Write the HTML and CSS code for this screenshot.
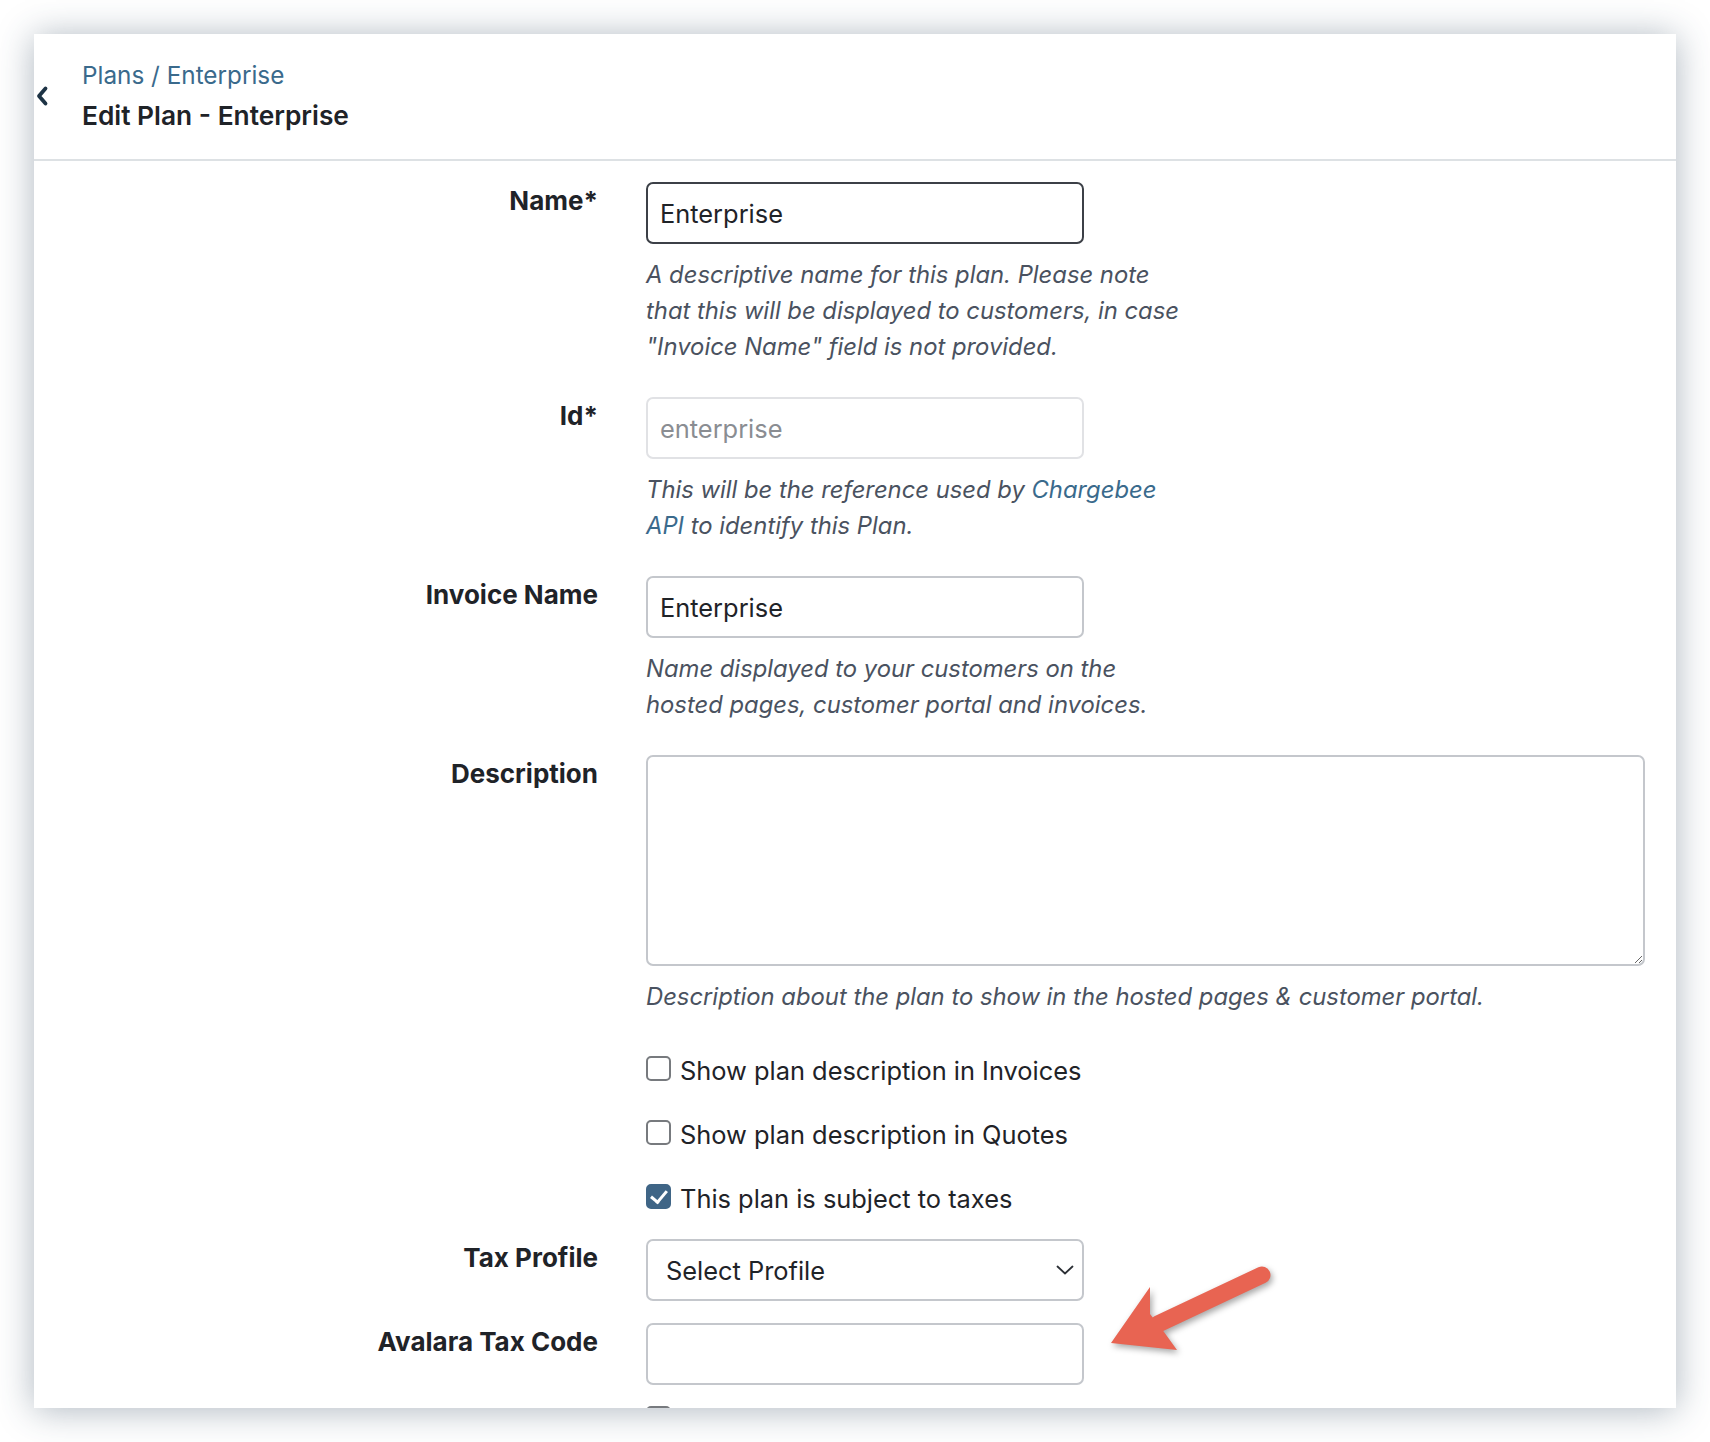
FILE: index.html
```html
<!DOCTYPE html>
<html lang="en">
  <head>
    <meta charset="UTF-8" />
    <meta name="viewport" content="width=device-width, initial-scale=1.0" />
    <title>Edit Plan - Enterprise</title>
    <link rel="stylesheet" href="styles.css">
  </head>

  <body>
    <div class="card">
      <!-- page header -->
      <div class="page-head">
        <a class="back" href="#">
          <svg width="14" height="22" viewBox="0 0 14 22">
            <path d="M10.5 3.5 L4 11 L10.5 18.5" fill="none" stroke="#1d3345" stroke-width="3.8" stroke-linecap="round" stroke-linejoin="round" />
          </svg>
        </a>
        <div>
          <div class="crumbs"><a href="#">Plans</a> / <a href="#">Enterprise</a></div>
          <h1>Edit Plan - Enterprise</h1>
        </div>
      </div>

      <form class="plan-form">
        <div class="field">
          <label class="label" for="name">Name*</label>
          <div>
            <input type="text" id="name" class="input focus" value="Enterprise" />
            <p class="help">A descriptive name for this plan. Please note that this will be displayed to customers, in case "Invoice Name" field is not provided.</p>
          </div>
        </div>

        <div class="field">
          <label class="label" for="plan-id">Id*</label>
          <div>
            <input type="text" id="plan-id" class="input disabled" value="enterprise" readonly />
            <p class="help">This will be the reference used by <a href="#">Chargebee API</a> to identify this Plan.</p>
          </div>
        </div>

        <div class="field">
          <label class="label" for="invoice-name">Invoice Name</label>
          <div>
            <input type="text" id="invoice-name" class="input" value="Enterprise" />
            <p class="help">Name displayed to your customers on the hosted pages, customer portal and invoices.</p>
          </div>
        </div>

        <div class="field">
          <label class="label" for="desc">Description</label>
          <div>
            <textarea id="desc" class="textarea"></textarea>
            <p class="help wide">Description about the plan to show in the hosted pages &amp; customer portal.</p>
          </div>
        </div>

        <div class="field">
          <div></div>
          <div class="checks">
            <label class="check"><input type="checkbox" /> Show plan description in Invoices</label>
            <label class="check"><input type="checkbox" /> Show plan description in Quotes</label>
            <label class="check"><input type="checkbox" checked /> This plan is subject to taxes</label>
          </div>
        </div>

        <div class="field">
          <label class="label" for="tax-profile">Tax Profile</label>
          <div>
            <div class="select-wrap">
              <select id="tax-profile" class="select">
                <option>Select Profile</option>
              </select>
              <svg class="caret" width="18" height="10" viewBox="0 0 18 10">
                <path d="M1.5 1.5 L9 8.5 L16.5 1.5" fill="none" stroke="#2b2f35" stroke-width="1.8" stroke-linecap="round" stroke-linejoin="round" />
              </svg>
            </div>
          </div>
        </div>

        <div class="field tight">
          <label class="label" for="avalara">Avalara Tax Code</label>
          <div>
            <input type="text" id="avalara" class="input" value="" />
          </div>
        </div>

        <div class="field">
          <div></div>
          <label class="check"><input type="checkbox" /> Avalara tax code will be applicable to this plan</label>
        </div>
      </form>

      <!-- annotation arrow -->
      <svg class="arrow" width="190" height="110" viewBox="0 0 190 110">
        <line x1="58" y1="62" x2="162" y2="13" stroke="#e86452" stroke-width="17" stroke-linecap="round" />
        <polygon points="11,81 50,25 50,52 64,70 77,88" fill="#e86452" />
      </svg>
    </div>
  </body>
</html>
```

FILE: styles.css
```css
/* base */
* {
  box-sizing: border-box;
}

body {
  margin: 0;
  padding: 34px 34px 0;
  height: 1442px;
  overflow: hidden;
  background: #fff;
  font-family: Inter, "Noto Sans", sans-serif;
  color: #1f2328;
}

a {
  color: #3a6a8c;
  text-decoration: none;
}

/* card */
.card {
  position: relative;
  width: 1642px;
  height: 1374px;
  background: #fff;
  overflow: hidden;
  box-shadow: 0 2px 34px rgba(40, 62, 86, 0.38);
}

/* header */
.page-head {
  display: flex;
  align-items: center;
  height: 127px;
  border-bottom: 2px solid #dde1e4;
}

.back {
  display: flex;
  width: 48px;
  padding-left: 1px;
  margin-top: -2px;
}

.crumbs {
  font-size: 24.3px;
  line-height: 36px;
  color: #3a6a8c;
}

h1 {
  margin: 3px 0 0;
  font-size: 26.3px;
  line-height: 40px;
  font-weight: 600;
  color: #1f2328;
}

/* form */
.plan-form {
  padding: 21px 31px 0 0;
}

.field {
  display: grid;
  grid-template-columns: 564px 1fr;
  column-gap: 48px;
  margin-bottom: 22px;
}

.field.tight {
  margin-bottom: 18px;
}

.label {
  text-align: right;
  font-size: 26px;
  line-height: 36px;
  font-weight: 700;
  padding-top: 1px;
}

.input,
.select,
.textarea {
  display: block;
  width: 438px;
  height: 62px;
  padding: 0 12px;
  border: 2px solid #c4c7cc;
  border-radius: 7px;
  background: #fff;
  font-family: inherit;
  font-size: 25.4px;
  color: #1f2328;
  outline: none;
}

.input.focus {
  border-color: #3c4047;
}

.input.disabled {
  border-color: #e1e2e5;
  color: #8a8d92;
}

.textarea {
  width: 100%;
  height: 211px;
  padding: 12px;
  resize: vertical;
}

.help {
  max-width: 552px;
  margin: 13px 0 0;
  padding-bottom: 10px;
  font-size: 23.8px;
  line-height: 36px;
  font-style: italic;
  color: #4a5260;
}

.help.wide {
  max-width: none;
}

/* checkboxes */
.checks {
  display: flex;
  flex-direction: column;
  gap: 28px;
  margin-top: 6px;
}

.check {
  display: flex;
  align-items: center;
  gap: 9px;
  font-size: 25.4px;
  line-height: 36px;
}

.check input {
  appearance: none;
  position: relative;
  flex: none;
  width: 25px;
  height: 25px;
  margin: 0 0 5px;
  border: 2px solid #777a7e;
  border-radius: 5px;
  background: #fff;
}

.check input:checked {
  background: #3f6586;
  border-color: #3f6586;
}

.check input:checked::after {
  content: "";
  position: absolute;
  left: 6px;
  top: 1px;
  width: 7px;
  height: 13px;
  border: solid #fff;
  border-width: 0 3.5px 3.5px 0;
  transform: rotate(40deg);
}

/* select */
.select-wrap {
  position: relative;
  width: 438px;
}

.select {
  appearance: none;
  padding-left: 18px;
}

.caret {
  position: absolute;
  right: 10px;
  top: 26px;
}

/* annotation */
.arrow {
  position: absolute;
  left: 1066px;
  top: 1228px;
  filter: drop-shadow(2px 3px 3px rgba(0, 0, 0, 0.35));
}
```
